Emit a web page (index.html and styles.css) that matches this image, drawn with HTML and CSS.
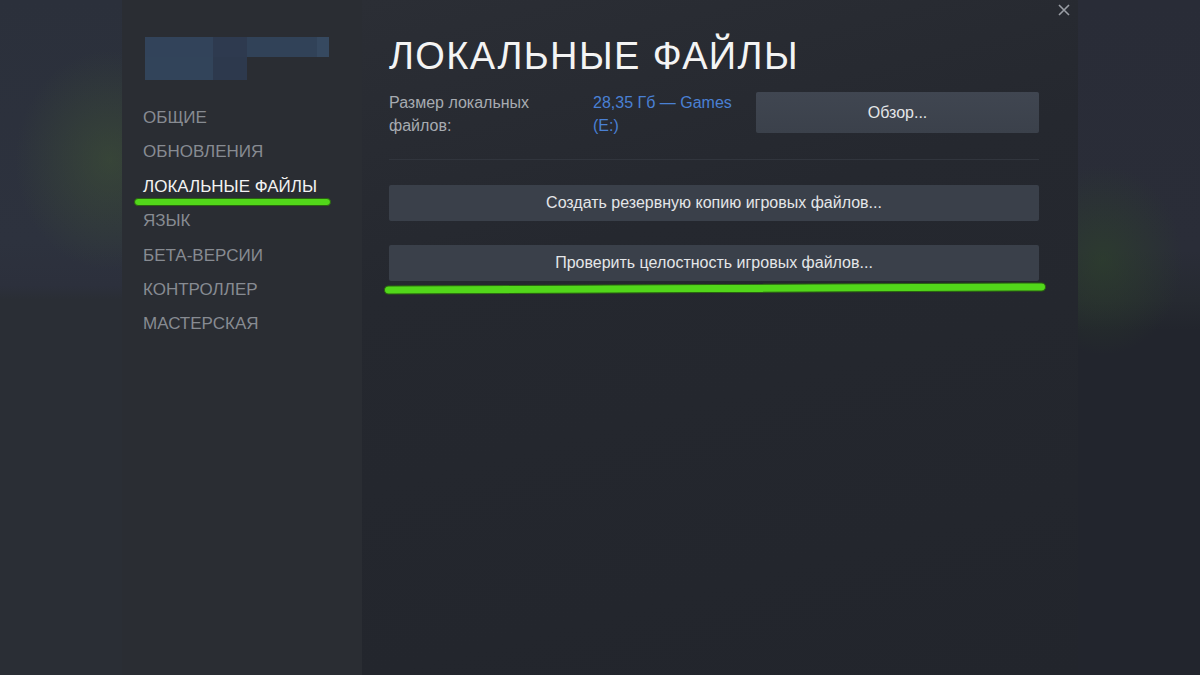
FILE: index.html
```html
<!DOCTYPE html>
<html lang="ru">
<head>
<meta charset="utf-8">
<title>Локальные файлы</title>
<link rel="stylesheet" href="styles.css">
</head>
<body>
<div class="page">
  <div class="backdrop backdrop-left"></div>
  <aside class="sidebar">
    <div class="game-name" aria-hidden="true">
      <div class="blur-row top"><span class="px p1"></span><span class="px p2"></span><span class="px p3"></span><span class="px p4"></span></div>
      <div class="blur-row bottom"><span class="px p5"></span><span class="px p6"></span></div>
    </div>
    <nav class="nav">
      <div class="nav-item">ОБЩИЕ</div>
      <div class="nav-item">ОБНОВЛЕНИЯ</div>
      <div class="nav-item active">ЛОКАЛЬНЫЕ ФАЙЛЫ<span class="marker marker-nav"></span></div>
      <div class="nav-item">ЯЗЫК</div>
      <div class="nav-item">БЕТА-ВЕРСИИ</div>
      <div class="nav-item">КОНТРОЛЛЕР</div>
      <div class="nav-item">МАСТЕРСКАЯ</div>
    </nav>
  </aside>
  <main class="main">
    <button class="close" aria-label="Закрыть">
      <svg width="12" height="12" viewBox="0 0 12 12"><path d="M1 1L11 11M11 1L1 11" stroke="currentColor" stroke-width="1.6" fill="none"/></svg>
    </button>
    <h1 class="title">ЛОКАЛЬНЫЕ ФАЙЛЫ</h1>
    <div class="info-row">
      <div class="label">Размер локальных файлов:</div>
      <div class="value">28,35 Гб — Games (E:)</div>
      <button class="btn btn-browse">Обзор...</button>
    </div>
    <div class="divider"></div>
    <div class="actions">
      <button class="btn btn-wide">Создать резервную копию игровых файлов...</button>
      <div class="verify-wrap">
        <button class="btn btn-wide">Проверить целостность игровых файлов...</button>
        <span class="marker marker-verify"></span>
      </div>
    </div>
  </main>
  <div class="backdrop backdrop-right"></div>
</div>
</body>
</html>
```

FILE: styles.css
```css
* { box-sizing: border-box; }

html, body {
  margin: 0;
  padding: 0;
  width: 1200px;
  height: 675px;
  overflow: hidden;
  background: #282b32;
  font-family: "Liberation Sans", Arial, sans-serif;
}

.page {
  display: grid;
  grid-template-columns: 122px 240px 716px 122px;
  height: 675px;
}

.backdrop-left {
  background:
    radial-gradient(ellipse 95px 110px at 110px 160px, rgba(64, 84, 52, 0.55), rgba(64, 84, 52, 0) 100%),
    linear-gradient(to bottom, #2b303b 0px, #2d323e 240px, #2c303c 285px, #2a2e35 300px, #2a2e35 100%);
}

.backdrop-right {
  background:
    radial-gradient(ellipse 80px 95px at 25px 260px, rgba(46, 68, 42, 0.6), rgba(46, 68, 42, 0) 100%),
    linear-gradient(to bottom, #292c37 0px, #2a2d38 250px, #262a31 300px, #22252d 330px, #22252d 100%);
}

.sidebar {
  background: #2a2d33;
  padding: 37px 0 0 21px;
}

.game-name {
  margin-left: 2px;
  width: 184px;
  height: 43px;
  display: flex;
  flex-direction: column;
}

.blur-row { display: flex; }
.blur-row.top { height: 20px; }
.blur-row.bottom { height: 23px; }
.px { display: block; height: 100%; }
.p1 { width: 68px; background: #32435a; }
.p2 { width: 34px; background: #2e3a4f; }
.p3 { width: 70px; background: #314258; }
.p4 { width: 12px; background: #364960; }
.p5 { width: 68px; background: #32445a; }
.p6 { width: 34px; background: #2d394d; }

.nav {
  margin-top: 21px;
  display: flex;
  flex-direction: column;
}

.nav-item {
  position: relative;
  height: 34.4px;
  line-height: 34.4px;
  font-size: 17px;
  color: #878b92;
  white-space: nowrap;
}

.nav-item.active { color: #f2f2f2; }

.marker {
  position: absolute;
  display: block;
  background: #52d71a;
  border: 1px solid #2a6410;
  border-radius: 6px;
}

.marker-nav {
  left: -9px;
  top: 28px;
  width: 197px;
  height: 8px;
}

.main {
  position: relative;
  background: linear-gradient(165deg, #2b2e35 0%, #25282f 35%, #22252c 100%);
  padding: 33px 39px 0 27px;
}

.close {
  position: absolute;
  top: 3px;
  right: 7px;
  width: 14px;
  height: 14px;
  padding: 1px;
  border: 0;
  background: transparent;
  color: #9a9ea5;
  display: flex;
}

.title {
  margin: 0;
  font-size: 38px;
  line-height: 46px;
  font-weight: 400;
  letter-spacing: 1.4px;
  color: #f4f4f4;
}

.info-row {
  margin-top: 12px;
  display: flex;
  align-items: flex-start;
}

.label {
  width: 204px;
  font-size: 16px;
  line-height: 23px;
  color: #a7abb1;
  padding-right: 60px;
}

.value {
  width: 163px;
  font-size: 16px;
  line-height: 23px;
  color: #4a80d4;
  padding-right: 14px;
}

.btn {
  font-family: "Liberation Sans", Arial, sans-serif;
  border: 0;
  border-radius: 2px;
  color: #e4e6e8;
  font-size: 16px;
  cursor: pointer;
}

.btn-browse {
  margin-top: 1px;
  width: 283px;
  height: 41px;
  background: linear-gradient(to bottom, #404651, #3b414b);
}

.divider {
  margin-top: 22px;
  height: 1px;
  background: #31353d;
}

.actions {
  margin-top: 25px;
  display: flex;
  flex-direction: column;
  gap: 24px;
}

.btn-wide {
  width: 100%;
  height: 36px;
  background: #3a404a;
}

.verify-wrap { position: relative; }

.marker-verify {
  left: -5px;
  top: 39px;
  width: 662px;
  height: 9px;
  transform: rotate(-0.27deg);
}
```
